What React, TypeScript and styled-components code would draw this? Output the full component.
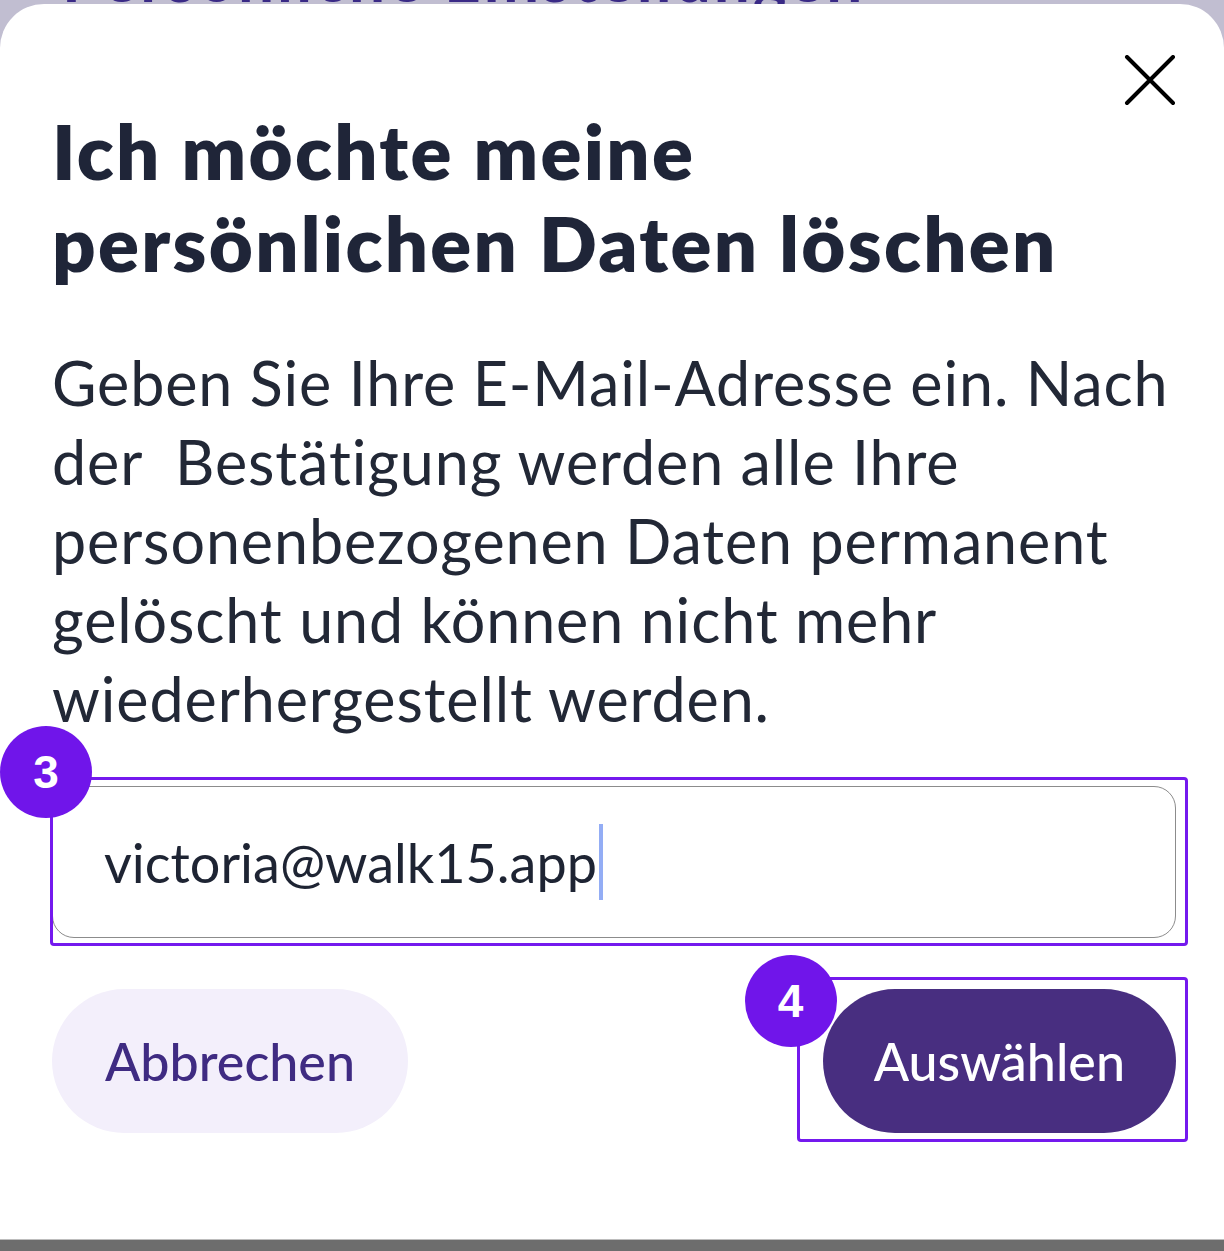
import styled, { createGlobalStyle } from 'styled-components'

const GlobalStyle = createGlobalStyle`
  html, body {
    margin: 0;
    padding: 0;
  }
  body {
    background: #c1bed1;
    font-family: 'Lato', 'Liberation Sans', sans-serif;
  }
`

const Page = styled.div`
  height: 1251px;
  display: flex;
  flex-direction: column;
  background: #c1bed1;
  overflow: hidden;
`

const BackdropPeek = styled.div`
  height: 4px;
  overflow: hidden;
  padding-left: 62px;
`

const BackdropTitle = styled.p`
  margin: -54px 0 0;
  font-size: 64px;
  line-height: 64px;
  font-weight: 700;
  letter-spacing: 3px;
  color: #3a2a86;
  white-space: nowrap;
`

const Sheet = styled.section`
  flex: 1;
  background: #ffffff;
  border-radius: 44px 44px 0 0;
  padding: 51px 48px 0 52px;
  display: flex;
  flex-direction: column;
`

const CloseRow = styled.div`
  display: flex;
  justify-content: flex-end;
`

const CloseButton = styled.button`
  width: 52px;
  height: 52px;
  padding: 0;
  border: none;
  background: transparent;
  display: flex;
  align-items: center;
  justify-content: center;
  cursor: pointer;
`

const Title = styled.h1`
  margin: -2px 0 0;
  font-size: 76px;
  line-height: 92px;
  font-weight: 800;
  color: #1f2538;
  letter-spacing: 2.3px;
`

const Description = styled.p`
  margin: 54px 0 0;
  font-size: 61px;
  line-height: 79px;
  font-weight: 400;
  color: #222836;
  letter-spacing: 0.9px;
  white-space: pre;
`

const FieldWrap = styled.div`
  position: relative;
  margin-top: 48px;
`

const Field = styled.div`
  height: 152px;
  box-sizing: border-box;
  border: 1.5px solid #8c8c8c;
  border-radius: 22px;
  padding-left: 51px;
  display: flex;
  align-items: center;
  font-size: 54px;
  color: #1e2433;
`

const Caret = styled.span`
  display: inline-block;
  width: 4px;
  height: 76px;
  margin-left: 2px;
  background: #93adf5;
`

const Highlight = styled.div<{ $top: number; $right: number; $bottom: number; $left: number }>`
  position: absolute;
  top: ${(p) => p.$top}px;
  right: ${(p) => p.$right}px;
  bottom: ${(p) => p.$bottom}px;
  left: ${(p) => p.$left}px;
  border: 3px solid #7419ee;
  border-radius: 4px;
  pointer-events: none;
`

const Badge = styled.span<{ $x: number; $y: number }>`
  position: absolute;
  left: ${(p) => p.$x - 46}px;
  top: ${(p) => p.$y - 46}px;
  width: 92px;
  height: 92px;
  border-radius: 50%;
  background: #7015ea;
  color: #ffffff;
  font-family: 'Liberation Sans', Arial, sans-serif;
  font-weight: 700;
  font-size: 46px;
  display: flex;
  align-items: center;
  justify-content: center;
`

const Actions = styled.div`
  margin-top: 51px;
  display: flex;
  justify-content: space-between;
`

const ButtonSlot = styled.div`
  position: relative;
`

const PillButton = styled.button<{ $primary?: boolean }>`
  height: 144px;
  border: none;
  border-radius: 72px;
  padding: 0 ${(p) => (p.$primary ? 51 : 53)}px;
  background: ${(p) => (p.$primary ? '#482e80' : '#f3effb')};
  color: ${(p) => (p.$primary ? '#ffffff' : '#3f2b82')};
  font-family: 'Lato', 'Liberation Sans', sans-serif;
  font-size: 52px;
  font-weight: 500;
  cursor: pointer;
`

const BottomBar = styled.div`
  height: 11px;
  background: #6d6d6d;
  border-top: 1px solid #bdbdbd;
`

function CloseIcon() {
  return (
    <svg width="52" height="52" viewBox="0 0 52 52" fill="none">
      <path d="M3 2 L49 48 M49 2 L3 48" stroke="#000" strokeWidth="4" strokeLinecap="round" />
    </svg>
  )
}

export default function App() {
  return (
    <Page>
      <GlobalStyle />
      <BackdropPeek aria-hidden="true">
        <BackdropTitle>Persönliche Einstellungen</BackdropTitle>
      </BackdropPeek>

      <Sheet role="dialog" aria-labelledby="delete-title">
        <CloseRow>
          <CloseButton type="button" aria-label="Schließen">
            <CloseIcon />
          </CloseButton>
        </CloseRow>

        <Title id="delete-title">
          Ich möchte meine
          <br />
          persönlichen Daten löschen
        </Title>

        <Description>
          {'Geben Sie Ihre E-Mail-Adresse ein. Nach\nder  Bestätigung werden alle Ihre\npersonenbezogenen Daten permanent\ngelöscht und können nicht mehr\nwiederhergestellt werden.'}
        </Description>

        <FieldWrap>
          <Field>
            victoria@walk15.app
            <Caret />
          </Field>
          <Highlight $top={-9} $right={-12} $bottom={-8} $left={-2} />
          <Badge $x={-6} $y={-14}>3</Badge>
        </FieldWrap>

        <Actions>
          <PillButton type="button">Abbrechen</PillButton>
          <ButtonSlot>
            <PillButton type="button" $primary>Auswählen</PillButton>
            <Highlight $top={-12} $right={-12} $bottom={-9} $left={-26} />
            <Badge $x={-32} $y={12}>4</Badge>
          </ButtonSlot>
        </Actions>
      </Sheet>

      <BottomBar />
    </Page>
  )
}
